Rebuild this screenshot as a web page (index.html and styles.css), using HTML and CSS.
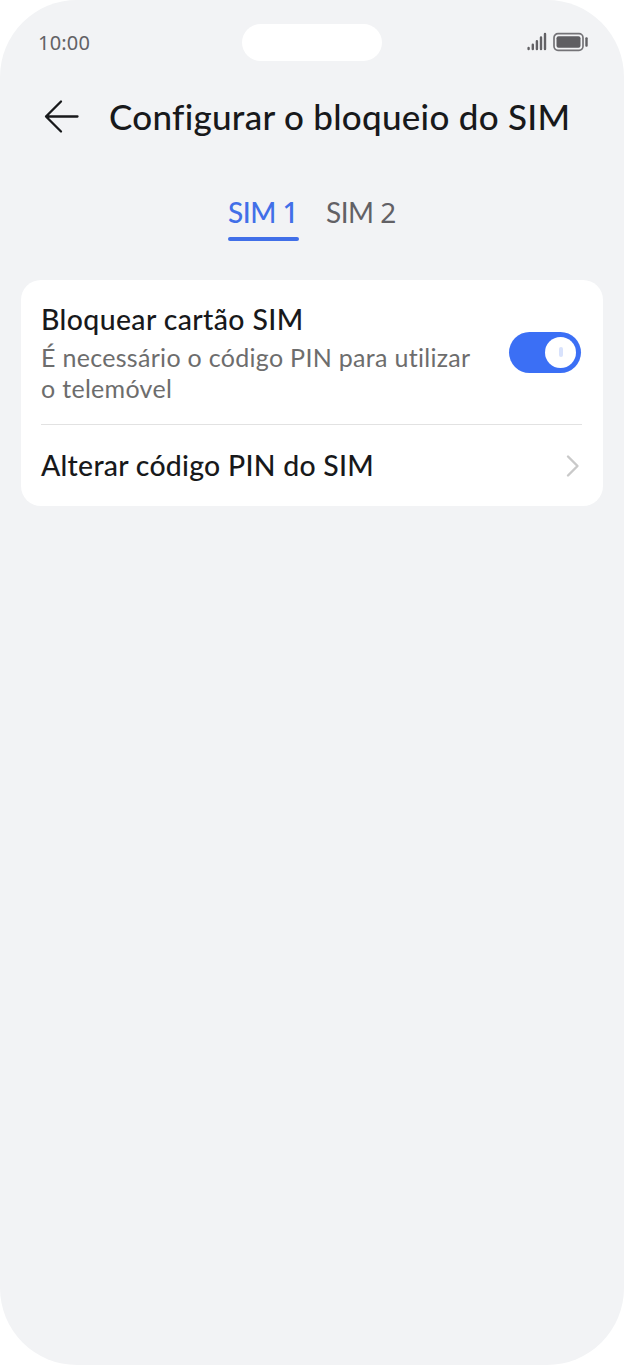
FILE: index.html
```html
<!DOCTYPE html>
<html lang="pt">
<head>
<meta charset="utf-8">
<title>Configurar o bloqueio do SIM</title>
<link rel="stylesheet" href="styles.css">
</head>
<body>
<main class="phone">
  <div class="status">
    <span class="time">10:00</span>
    <span class="island"></span>
    <span class="indicators">
      <svg width="62" height="22" viewBox="0 0 62 22">
        <g stroke="#626165" stroke-width="2.4" stroke-linecap="round">
          <path d="M2.6 18V19M6.8 14.8V19M10.9 11.2V19M15 7.4V19M19 4V19"/>
        </g>
        <rect x="28" y="3.7" width="29" height="16.6" rx="4" fill="none" stroke="#747377" stroke-width="1.7"/>
        <rect x="30.5" y="6.3" width="24" height="11.4" rx="2" fill="#5f5e62"/>
        <rect x="59.3" y="7.3" width="2.4" height="9.4" rx="1" fill="#626165"/>
      </svg>
    </span>
  </div>
  <header class="header">
    <svg class="back" width="36" height="36" viewBox="0 0 36 36" fill="none" stroke="#18191b" stroke-width="2.3" stroke-linecap="round" stroke-linejoin="round">
      <path d="M17 2.5L2 17.5L17 32.5M2 17.5H33.5"/>
    </svg>
    <h1 class="title">Configurar o bloqueio do SIM</h1>
  </header>
  <nav class="tabs">
    <span class="tab">
      <span class="tab-text tab-text-active">SIM <span class="digit">1</span></span>
      <span class="underline"></span>
    </span>
    <span class="tab"><span class="tab-text">SIM <span class="digit">2</span></span></span>
  </nav>
  <section class="card">
    <div class="row row-lock">
      <div class="copy">
        <div class="label label-lock">Bloquear cartão SIM</div>
        <div class="hint">É necessário o código PIN para utilizar<br>o telemóvel</div>
      </div>
      <span class="switch"><span class="knob"><span class="mark"></span></span></span>
    </div>
    <div class="row row-pin">
      <span class="label label-pin">Alterar código PIN do SIM</span>
      <svg class="chevron" width="14" height="24" viewBox="0 0 14 24" fill="none" stroke="#c9c9c9" stroke-width="2.4" stroke-linecap="round" stroke-linejoin="round">
        <path d="M2 2.5L11.5 12L2 21.5"/>
      </svg>
    </div>
  </section>
</main>
</body>
</html>
```
FILE: styles.css
```css
* { box-sizing: border-box; }
body { margin: 0; background: #fff; font-family: Lato, "Noto Sans", sans-serif; font-variant-ligatures: none; color: #18191b; }
.phone { width: 624px; height: 1365px; background: #f2f3f5; border-radius: 77px; overflow: hidden; }
.status { display: grid; grid-template-columns: 1fr 140px 1fr; height: 61px; padding: 24px 36px 0 35px; }
.time { padding-left: 3px; font-family: "Noto Sans", sans-serif; font-size: 20px; line-height: 37px; letter-spacing: 0.2px; color: #626165; white-space: nowrap; }
.island { height: 37px; border-radius: 19px; background: #fff; }
.indicators { display: flex; justify-content: flex-end; padding-top: 6px; }
.header { display: flex; align-items: center; height: 112px; padding: 0 0 0 44px; }
.back { flex: none; margin-right: 29px; }
.title { margin: 0; padding-bottom: 2px; font-size: 35px; font-weight: 500; line-height: 46px; letter-spacing: 0.28px; white-space: nowrap; }
.tabs { display: flex; gap: 27px; padding: 19px 0 0 228px; height: 107px; }
.tab { display: flex; flex-direction: column; justify-content: space-between; width: 71px; height: 49px; }
.tab-text { font-size: 28px; line-height: 41px; letter-spacing: -0.5px; color: #626165; white-space: nowrap; }
.tab-text-active { color: #416fe8; font-weight: 500; }
.digit { font-family: "Noto Sans", sans-serif; }
.underline { height: 4px; border-radius: 2px; background: #416fe8; }
.card { width: 582px; height: 226px; margin-left: 21px; padding: 0 21px 0 20px; border-radius: 20px; background: #fff; }
.row { display: flex; justify-content: space-between; align-items: center; }
.row-lock { height: 145px; border-bottom: 1px solid #e2e2e2; }
.row-pin { height: 81px; }
.copy { padding-top: 1px; }
.label { font-size: 28.4px; font-weight: 500; line-height: 37px; white-space: nowrap; }
.label-lock { margin-bottom: 4px; letter-spacing: 0.4px; }
.label-pin { letter-spacing: 0.27px; }
.hint { font-size: 25px; line-height: 31px; letter-spacing: 0.3px; color: #6d6d6d; white-space: nowrap; }
.switch { flex: none; display: flex; justify-content: flex-end; align-items: center; width: 72px; height: 41px; margin-right: 1px; padding-right: 5px; border-radius: 21px; background: #3b6ff5; }
.knob { display: flex; align-items: center; justify-content: center; width: 31px; height: 31px; border-radius: 50%; background: #fff; }
.mark { width: 4px; height: 10px; border-radius: 2px; background: #d8e2fc; }
.chevron { flex: none; margin-right: 2px; }
```
